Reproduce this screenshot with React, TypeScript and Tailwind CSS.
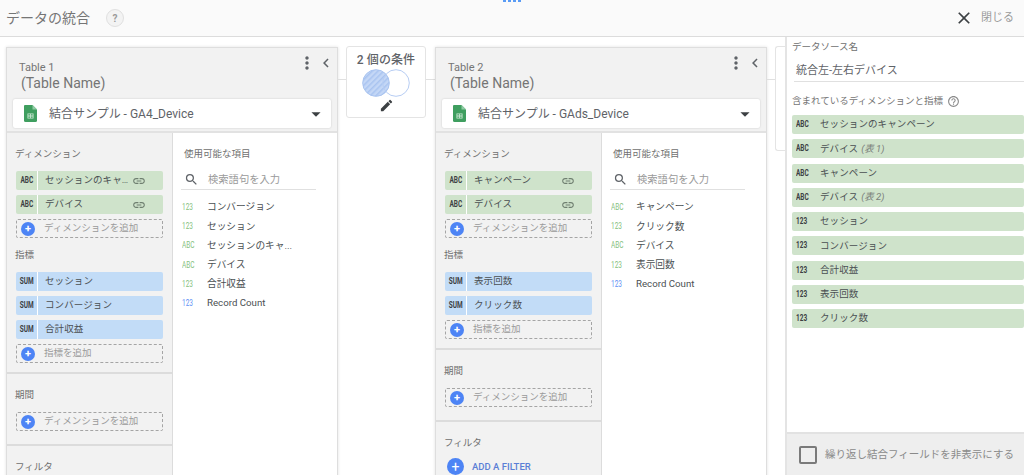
import { MdArrowDropDown, MdChevronLeft, MdClose, MdEdit, MdHelpOutline, MdLink, MdMoreVert, MdSearch } from "react-icons/md";

const FONT = "font-['Roboto','Noto_Sans_CJK_JP',sans-serif]";

type Pick = { type: string; name: string; linked?: boolean };
type Avail = { type: string; name: string; tone: "green" | "blue" };

function SheetIcon() {
  return (
    <svg width="13" height="17" viewBox="0 0 13 17" className="shrink-0">
      <path d="M1 0h7.5L13 4.5V15.5a1.5 1.5 0 0 1-1.5 1.5h-10A1.5 1.5 0 0 1 0 15.5V1a1 1 0 0 1 1-1z" fill="#3f9e5f" />
      <path d="M8.5 0L13 4.5H8.5z" fill="#8fcba4" />
      <path d="M3.5 8.5h6v5h-6zM4.3 9.3v1.3h1.8V9.3zm2.6 0v1.3h1.8V9.3zM4.3 11.4v1.3h1.8v-1.3zm2.6 0v1.3h1.8v-1.3z" fill="#cfe9d7" fillRule="evenodd" />
    </svg>
  );
}

function Badge({ children, className }: { children: string; className: string }) {
  return <span className={`inline-block scale-x-[0.72] text-[9px] leading-none font-bold ${className}`}>{children}</span>;
}

function Chip({ type, name, linked, color }: Pick & { color: string }) {
  return (
    <div className={`flex h-[19px] items-center rounded-[2px] ${color}`}>
      <div className="flex h-full w-[22px] shrink-0 items-center justify-center border-r border-white">
        <Badge className="text-[#3c4043]">{type}</Badge>
      </div>
      <span className="ml-[7px] flex-1 text-[9.5px] tracking-[0.1px] whitespace-nowrap text-[#4a4f52]">{name}</span>
      {linked && <MdLink size={14} className="mr-[17px] ml-1 shrink-0 text-[#6f7f70]" />}
    </div>
  );
}

function AddBox({ label }: { label: string }) {
  return (
    <div className="flex h-[19px] items-center rounded-[2px] border border-dashed border-[#a5a5a5] pl-1">
      <span className="flex h-[14px] w-[14px] items-center justify-center rounded-full bg-[#4d84f5] text-[11px] leading-none font-bold text-white">+</span>
      <span className="ml-[9px] text-[9.5px] text-[#9a9a9a]">{label}</span>
    </div>
  );
}

function SectionLabel({ children }: { children: string }) {
  return <div className="mb-[10px] -ml-px h-[14px] text-[9.5px] leading-[14px] text-[#6f6f6f]">{children}</div>;
}

function TableCard({
  title,
  source,
  dims,
  metrics,
  available,
  addFilter,
}: {
  title: string;
  source: string;
  dims: Pick[];
  metrics: Pick[];
  available: Avail[];
  addFilter?: boolean;
}) {
  return (
    <div className="flex h-[430px] w-[332px] shrink-0 flex-col overflow-hidden border border-[#dedede] bg-[#f2f2f2] shadow-[0_0_3px_rgba(0,0,0,0.12)]">
      <div className="flex h-[85px] shrink-0 flex-col border-b-2 border-[#e2e2e2] px-[6px]">
        <div className="flex h-[51px] justify-between">
          <div className="pt-[12px] pl-[6px] text-[#757575]">
            <div className="h-[15px] text-[11px] leading-[15px]">{title}</div>
            <div className="ml-[2px] text-[14px] leading-[16px]">(Table Name)</div>
          </div>
          <div className="mt-[5px] mr-[-4px] flex items-start text-[#5f6368]">
            <MdMoreVert size={20} />
            <MdChevronLeft size={18} className="mt-px" />
          </div>
        </div>
        <div className="flex h-[29px] items-center rounded-[2px] bg-white pl-[11px] shadow-[0_0_2px_rgba(0,0,0,0.18)]">
          <SheetIcon />
          <span className="ml-[12px] flex-1 text-[12px] text-[#5f6368]">{source}</span>
          <MdArrowDropDown size={22} className="mr-[4px] text-[#3c4043]" />
        </div>
      </div>
      <div className="flex flex-1">
        <div className="w-[166px] shrink-0 border-r border-[#dcdcdc]">
          <div className="px-[9px] pt-[14px] pb-[10px]">
            <SectionLabel>ディメンション</SectionLabel>
            <div className="flex flex-col gap-[5px]">
              {dims.map((d) => (
                <Chip key={d.name} {...d} color="bg-[#cfe3cb]" />
              ))}
              <AddBox label="ディメンションを追加" />
            </div>
          </div>
          <div className="border-b-2 border-[#dcdcdc] px-[9px] pb-[9px]">
            <SectionLabel>指標</SectionLabel>
            <div className="flex flex-col gap-[5px]">
              {metrics.map((m) => (
                <Chip key={m.name} {...m} color="bg-[#c2dcf7]" />
              ))}
              <AddBox label="指標を追加" />
            </div>
          </div>
          <div className="border-b-2 border-[#dcdcdc] px-[9px] pt-[14px] pb-[13px]">
            <SectionLabel>期間</SectionLabel>
            <AddBox label="ディメンションを追加" />
          </div>
          <div className="px-[9px] pt-[14px]">
            <div className="-ml-px h-[14px] text-[9.5px] leading-[14px] text-[#6f6f6f]">フィルタ</div>
            {addFilter && (
              <div className="mt-[8px] flex items-center">
                <span className="ml-[2px] flex h-[17px] w-[17px] items-center justify-center rounded-full bg-[#4d84f5] text-[14px] leading-none text-white">+</span>
                <span className="ml-2 text-[9.5px] leading-[14px] font-medium text-[#5b7fd6]">ADD A FILTER</span>
              </div>
            )}
          </div>
        </div>
        <div className="flex-1 bg-white pt-[14px] pl-[8px]">
          <div className="ml-[3px] h-[14px] text-[9.5px] leading-[14px] text-[#6f6f6f]">使用可能な項目</div>
          <div className="mt-[9px] flex h-[20px] w-[135px] items-center border-b border-[#e0e0e0] pl-[3px]">
            <MdSearch size={15} className="text-[#5f6368]" />
            <span className="ml-[9px] text-[10.3px] text-[#9a9a9a]">検索語句を入力</span>
          </div>
          <div className="mt-[8px] flex flex-col">
            {available.map((a) => (
              <div key={a.name} className="flex h-[19.2px] items-center pl-px">
                <div className="flex w-[25px] shrink-0 items-center">
                  <Badge className={`origin-left !font-normal ${a.tone === "blue" ? "text-[#5f92f5]" : "text-[#86bf80]"}`}>{a.type}</Badge>
                </div>
                <span className="text-[9.7px] text-[#4a4f52]">{a.name}</span>
              </div>
            ))}
          </div>
        </div>
      </div>
    </div>
  );
}

function Connector({ w }: { w: string }) {
  return <div className={`mt-[32px] shrink-0 border-t border-[#e0e0e0] ${w}`} />;
}

function OutputChip({ type, name, note }: { type: string; name: string; note?: string }) {
  return (
    <div className="flex h-[19px] items-center rounded-[2px] bg-[#cfe3cb] pl-1">
      <div className="flex w-[24px] shrink-0 items-center">
        <Badge className="origin-left text-[#3c4043]">{type}</Badge>
      </div>
      <span className="text-[9.5px] tracking-[0.1px] text-[#4a4f52]">{name}</span>
      {note && <span className="ml-[3px] text-[9.5px] text-[#7a7f7a] italic">{note}</span>}
    </div>
  );
}

export default function App() {
  return (
    <div className={`relative flex h-[475px] w-[1024px] flex-col overflow-hidden bg-white ${FONT}`}>
      {/* loading dots */}
      <div className="absolute top-0 left-[503px] flex gap-[2px]">
        {[0, 1, 2, 3].map((i) => (
          <span key={i} className="h-[2px] w-[3px] bg-[#5a9cf5]" />
        ))}
      </div>

      <header className="flex h-[37px] shrink-0 items-center border-b border-[#dcdcdc] bg-[#fafafa] pl-[6px]">
        <h1 className="text-[14px] font-normal text-[#757575]">データの統合</h1>
        <span className="ml-[16px] flex h-[18px] w-[18px] items-center justify-center rounded-full border border-[#e0e0e0] bg-[#f3f3f3] text-[10px] font-bold text-[#9a9a9a]">?</span>
        <MdClose size={20} className="mr-[7px] ml-auto text-[#3c4043]" />
        <span className="mr-[10px] text-[11px] text-[#9a9a9a]">閉じる</span>
      </header>

      <div className="flex min-h-0 flex-1 items-start overflow-hidden">
        <div className="flex items-start pt-[10px] pl-[6px]">
          <TableCard
            title="Table 1"
            source="結合サンプル - GA4_Device"
            dims={[
              { type: "ABC", name: "セッションのキャ…", linked: true },
              { type: "ABC", name: "デバイス", linked: true },
            ]}
            metrics={[
              { type: "SUM", name: "セッション" },
              { type: "SUM", name: "コンバージョン" },
              { type: "SUM", name: "合計収益" },
            ]}
            available={[
              { type: "123", name: "コンバージョン", tone: "green" },
              { type: "123", name: "セッション", tone: "green" },
              { type: "ABC", name: "セッションのキャ...", tone: "green" },
              { type: "ABC", name: "デバイス", tone: "green" },
              { type: "123", name: "合計収益", tone: "green" },
              { type: "123", name: "Record Count", tone: "blue" },
            ]}
          />
          <Connector w="w-2" />
          <div className="-mt-px flex h-[72px] w-[80px] shrink-0 flex-col items-center rounded-[3px] border border-[#e4e4e4] bg-white pt-[6px]">
            <span className="text-[12px] leading-[15px] font-medium tracking-[0.1px] text-[#5f6368]">2 個の条件</span>
            <svg width="48" height="28" viewBox="0 0 48 28" className="mt-px">
              <defs>
                <pattern id="hatch" width="4" height="4" patternUnits="userSpaceOnUse" patternTransform="rotate(45)">
                  <rect width="4" height="4" fill="#c4d7f6" />
                  <rect width="1.5" height="4" fill="#a9c4f0" />
                </pattern>
              </defs>
              <circle cx="14" cy="14" r="13.3" fill="url(#hatch)" stroke="#a9c4f0" />
              <circle cx="34" cy="14" r="13.3" fill="none" stroke="#b7cdf3" />
            </svg>
            <MdEdit size={15} className="mt-px text-[#3c4043]" />
          </div>
          <Connector w="w-[9px]" />
          <TableCard
            title="Table 2"
            source="結合サンプル - GAds_Device"
            dims={[
              { type: "ABC", name: "キャンペーン", linked: true },
              { type: "ABC", name: "デバイス", linked: true },
            ]}
            metrics={[
              { type: "SUM", name: "表示回数" },
              { type: "SUM", name: "クリック数" },
            ]}
            available={[
              { type: "ABC", name: "キャンペーン", tone: "green" },
              { type: "123", name: "クリック数", tone: "green" },
              { type: "ABC", name: "デバイス", tone: "green" },
              { type: "123", name: "表示回数", tone: "green" },
              { type: "123", name: "Record Count", tone: "blue" },
            ]}
            addFilter
          />
          <Connector w="w-2" />
          <div className="-mt-px h-[105px] w-[10px] shrink-0 rounded-l-[3px] border-y border-l border-[#e4e4e4]" />
        </div>

        <aside className="flex h-full flex-1 flex-col border-l-2 border-[#e4e4e4] bg-white">
          <div className="flex-1 pt-[3px] pl-[5px]">
            <div className="h-[14px] text-[9.5px] leading-[14px] text-[#6f6f6f]">データソース名</div>
            <div className="ml-[2px] flex h-[28px] items-end border-b border-[#e0e0e0] pb-[2px] pl-[2px] text-[11px] text-[#5f6368]">統合左-左右デバイス</div>
            <div className="mt-[12px] flex h-[14px] items-center text-[9.5px] text-[#757575]">
              含まれているディメンションと指標
              <MdHelpOutline size={13} className="ml-[4px] text-[#8a8a8a]" />
            </div>
            <div className="mt-[7px] flex flex-col gap-[5.25px]">
              <OutputChip type="ABC" name="セッションのキャンペーン" />
              <OutputChip type="ABC" name="デバイス" note="(表 1)" />
              <OutputChip type="ABC" name="キャンペーン" />
              <OutputChip type="ABC" name="デバイス" note="(表 2)" />
              <OutputChip type="123" name="セッション" />
              <OutputChip type="123" name="コンバージョン" />
              <OutputChip type="123" name="合計収益" />
              <OutputChip type="123" name="表示回数" />
              <OutputChip type="123" name="クリック数" />
            </div>
          </div>
          <div className="flex h-[43px] shrink-0 items-center border-t-2 border-[#e2e2e2] bg-[#eeeeee] pl-[12px]">
            <span className="h-[18px] w-[18px] shrink-0 rounded-[2px] border-2 border-[#7a7a7a]" />
            <span className="ml-[8px] text-[10.5px] whitespace-nowrap text-[#8a8a8a]">繰り返し結合フィールドを非表示にする</span>
          </div>
        </aside>
      </div>
    </div>
  );
}
